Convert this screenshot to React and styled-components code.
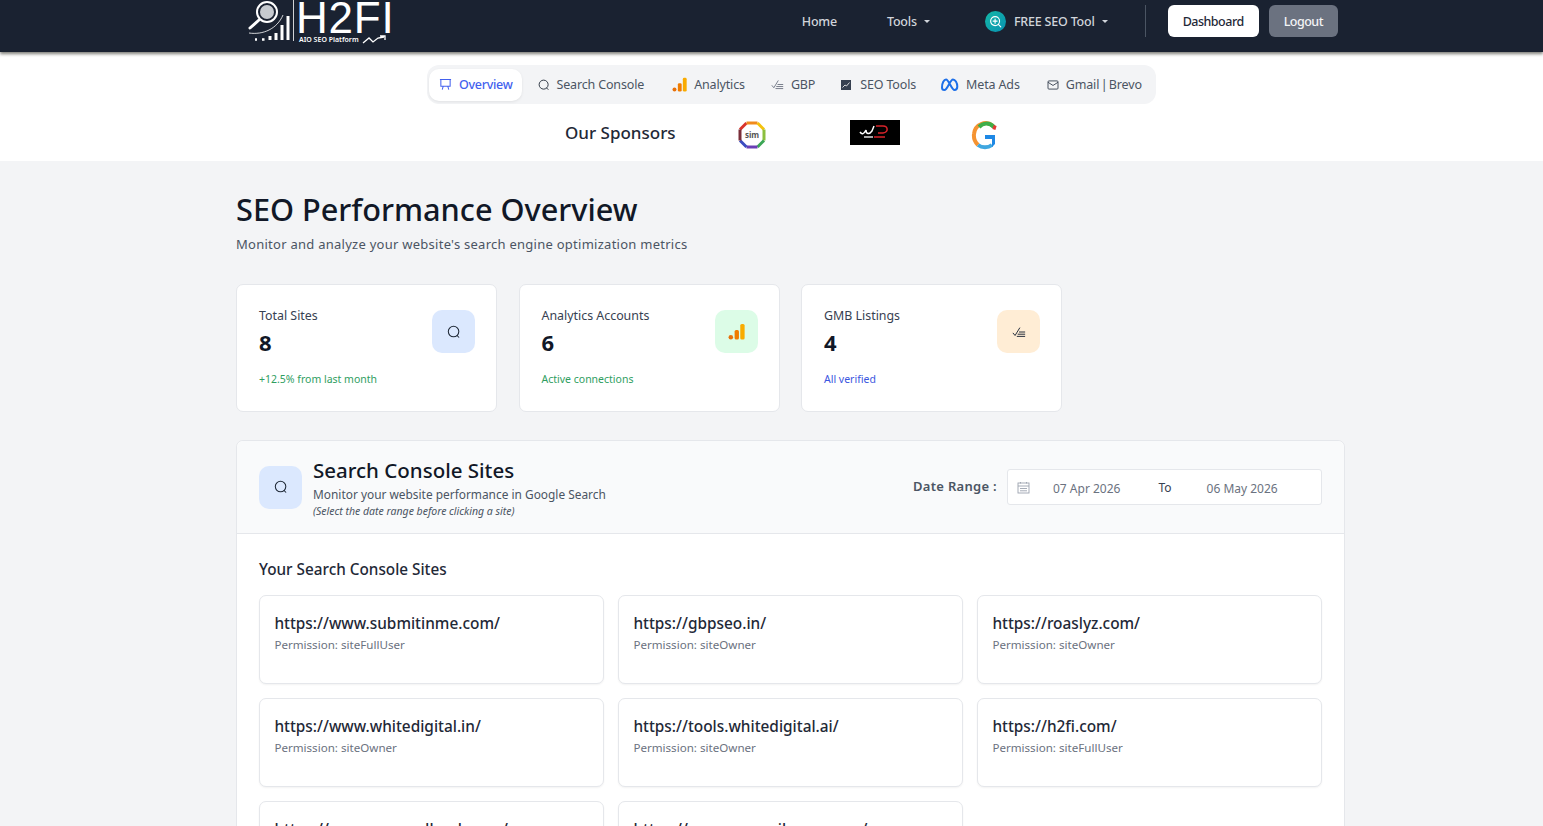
import React from "react";
import styled, { createGlobalStyle } from "styled-components";

const GlobalStyle = createGlobalStyle`
  html, body {
    margin: 0;
    height: 826px;
    overflow: hidden;
    background: #f3f4f6;
    font-family: "Noto Sans", "Open Sans", sans-serif;
    color: #111827;
  }
  * { box-sizing: border-box; }
`;

const Page = styled.div`
  height: 826px;
  overflow: hidden;
`;

const TopBar = styled.header`
  height: 52px;
  background: #1a2231;
  box-shadow: 0 2px 3px rgba(40, 40, 30, 0.6);
  display: flex;
  justify-content: space-between;
  padding: 0 205px 0 247px;
  position: relative;
`;

const Logo = styled.div`
  display: flex;
  align-items: flex-start;
  color: #fff;
  height: 46px;
  overflow: hidden;
`;

const LogoText = styled.div`
  display: flex;
  flex-direction: column;
  margin-left: 1px;
`;

const LogoName = styled.div`
  font-family: "Liberation Sans", sans-serif;
  font-weight: 400;
  font-size: 44px;
  line-height: 35px;
  letter-spacing: 0.8px;
  height: 35px;
  overflow: hidden;
`;

const LogoTag = styled.div`
  display: flex;
  align-items: center;
  gap: 3px;
  font-size: 7px;
  font-weight: 600;
  padding-left: 3px;
  line-height: 9px;
  height: 9px;
`;

const TopNav = styled.nav`
  display: flex;
  align-items: center;
  height: 42px;
  font-size: 12.5px;
  font-weight: 500;
  letter-spacing: -0.2px;
  color: #d1d5db;
`;

const TopLink = styled.span`
  display: inline-flex;
  align-items: center;
  margin-left: ${(p) => p.$gap}px;
`;

const Caret = styled.i`
  display: inline-block;
  margin-left: 7px;
  border-top: 3px solid currentColor;
  border-left: 3px solid transparent;
  border-right: 3px solid transparent;
`;

const SeoBadge = styled.span`
  width: 21px;
  height: 21px;
  border-radius: 50%;
  background: linear-gradient(135deg, #14b8a6, #0891b2);
  display: inline-flex;
  align-items: center;
  justify-content: center;
  margin-right: 8px;
`;

const NavDivider = styled.span`
  width: 1px;
  height: 32px;
  background: #4b5563;
  margin: 0 22px 0 37px;
`;

const NavButton = styled.span`
  height: 32px;
  border-radius: 6px;
  padding: 0 15px;
  display: inline-flex;
  align-items: center;
  letter-spacing: -0.5px;
  background: ${(p) => (p.$light ? "#fff" : "#6b7280")};
  color: ${(p) => (p.$light ? "#1f2937" : "#f3f4f6")};
  margin-right: ${(p) => (p.$light ? 10 : 0)}px;
`;

const SubHeader = styled.div`
  background: #fff;
  height: 109px;
  padding-top: 13px;
`;

const TabsRow = styled.div`
  display: flex;
  padding-left: 427px;
`;

const Tabs = styled.div`
  display: flex;
  align-items: center;
  height: 39px;
  padding: 0 4px 0 2px;
  border-radius: 12px;
  background: #f3f4f6;
`;

const Tab = styled.span`
  display: inline-flex;
  align-items: center;
  gap: ${(p) => p.$gap || 7}px;
  height: 32px;
  padding: 0 10px;
  margin-right: ${(p) => p.$mr || 0}px;
  border-radius: 10px;
  font-size: 12.5px;
  letter-spacing: ${(p) => (p.$active ? -0.3 : -0.15)}px;
  word-spacing: ${(p) => p.$ws || 0}px;
  white-space: nowrap;
  color: ${(p) => (p.$active ? "#4361ee" : "#4b5563")};
  background: ${(p) => (p.$active ? "#fff" : "transparent")};
  box-shadow: ${(p) => (p.$active ? "0 1px 3px rgba(0,0,0,.08)" : "none")};
  font-weight: ${(p) => (p.$active ? 500 : 400)};
`;

const Sponsors = styled.div`
  display: flex;
  align-items: center;
  height: 36px;
  margin-top: 11px;
  padding-left: 565px;
`;

const SponsorTitle = styled.div`
  font-size: 17px;
  font-weight: 500;
  color: #1f2937;
  width: 172px;
  margin-top: -2px;
`;

const SponsorMark = styled.div`
  display: flex;
  margin-top: 3px;
`;

const WdLogo = styled.div`
  width: 50px;
  height: 25px;
  background: #000;
  margin-left: 83px;
  margin-right: 71px;
  margin-top: -2px;
  display: flex;
  align-items: center;
  justify-content: center;
`;

const Main = styled.main`
  padding: 28px 198px 0 236px;
`;

const PageTitle = styled.h1`
  margin: 0;
  font-size: 30.7px;
  line-height: 41px;
  font-weight: 500;
  color: #111827;
`;

const PageSub = styled.p`
  margin: 4px 0 0;
  font-size: 13px;
  line-height: 20px;
  letter-spacing: 0.26px;
  color: #4b5563;
`;

const Stats = styled.div`
  display: flex;
  gap: 21.5px;
  margin-top: 30px;
`;

const StatCard = styled.div`
  width: 261px;
  height: 128px;
  background: #fff;
  border: 1px solid #e5e7eb;
  border-radius: 7px;
  padding: 22px 21px 0 22px;
  display: flex;
  justify-content: space-between;
  align-items: flex-start;
`;

const StatLabel = styled.div`
  font-size: 12.4px;
  line-height: 17px;
  color: #374151;
`;

const StatValue = styled.div`
  font-size: 22px;
  font-weight: 700;
  line-height: 30px;
  margin-top: 3px;
  color: #111827;
`;

const StatNote = styled.div`
  font-size: 10.5px;
  line-height: 14px;
  margin-top: 15px;
  color: ${(p) => p.$color};
`;

const IconTile = styled.div`
  width: 43px;
  height: 43px;
  border-radius: 10px;
  background: ${(p) => p.$bg};
  display: flex;
  align-items: center;
  justify-content: center;
  flex-shrink: 0;
  margin-top: ${(p) => p.$mt || 0}px;
`;

const Panel = styled.section`
  margin-top: 28px;
  background: #fff;
  border: 1px solid #e5e7eb;
  border-radius: 7px 7px 0 0;
`;

const PanelHead = styled.div`
  height: 93px;
  background: #f9fafb;
  border-bottom: 1px solid #e5e7eb;
  border-radius: 7px 7px 0 0;
  padding: 0 22px;
  display: flex;
  align-items: center;
  justify-content: space-between;
`;

const HeadLeft = styled.div`
  display: flex;
  align-items: center;
  gap: 11px;
`;

const PanelTitle = styled.h2`
  margin: 0;
  font-size: 20.5px;
  line-height: 26px;
  font-weight: 500;
  color: #111827;
`;

const PanelSub = styled.div`
  font-size: 11.9px;
  line-height: 17px;
  margin-top: 3px;
  color: #4b5563;
`;

const PanelHint = styled.div`
  font-size: 10.5px;
  line-height: 13px;
  margin-top: 2px;
  font-style: italic;
  color: #4b5563;
`;

const DateRow = styled.div`
  display: flex;
  align-items: center;
  gap: 10px;
`;

const DateLabel = styled.span`
  font-size: 13px;
  font-weight: 600;
  letter-spacing: 0.3px;
  color: #4b5563;
  margin-top: -3px;
`;

const DateBox = styled.div`
  width: 315px;
  height: 36px;
  background: #fff;
  border: 1px solid #e5e7eb;
  border-radius: 3px;
  padding: 0 9px;
  display: flex;
  align-items: center;
  font-size: 12px;
  color: #6b7280;
`;

const DateValue = styled.span`
  margin-left: ${(p) => p.$ml}px;
  margin-top: 2px;
`;

const DateTo = styled.span`
  margin-left: 38px;
  color: #374151;
`;

const PanelBody = styled.div`
  padding: 25px 22px 0;
`;

const SitesTitle = styled.h3`
  margin: 0 0 16px;
  font-size: 15.3px;
  line-height: 20px;
  font-weight: 500;
  color: #1f2937;
`;

const SiteGrid = styled.div`
  display: grid;
  grid-template-columns: 345px 345px 345px;
  column-gap: 14px;
  row-gap: 14.5px;
`;

const SiteCard = styled.div`
  height: 88.5px;
  border: 1px solid #e5e7eb;
  border-radius: 7px;
  box-shadow: 0 1px 2px rgba(0, 0, 0, 0.05);
  padding: 17.2px 14.4px;
  background: #fff;
`;

const SiteUrl = styled.div`
  font-size: 15.4px;
  line-height: 21px;
  font-weight: 500;
  color: #1f2937;
`;

const SitePerm = styled.div`
  font-size: 11.6px;
  line-height: 16px;
  margin-top: 2.8px;
  color: #6b7280;
`;

const SearchIcon = ({ size = 14, color = "#1f2937" }) => (
  <svg width={size} height={size} viewBox="0 0 16 16" fill="none" stroke={color} strokeWidth="1.2">
    <circle cx="7.5" cy="7.5" r="6" />
    <path d="M11.5 12l2 2" strokeLinecap="round" />
  </svg>
);

const ZoomPlusIcon = () => (
  <svg width="13" height="13" viewBox="0 0 16 16" fill="none" stroke="#fff" strokeWidth="1.4">
    <circle cx="7.5" cy="7.5" r="5.5" />
    <path d="M11.5 11.5l3 3M7.500 5v5M5 7.500h5" strokeLinecap="round" />
  </svg>
);

const ChecklistIcon = ({ size = 14, color = "#1f2937" }) => (
  <svg width={size} height={size} viewBox="0 0 16 16" fill="none" stroke={color} strokeWidth="1.1">
    <path d="M1 9l2.500 3L9 3" />
    <path d="M8 8h7M6.500 10.500H15M5.500 13H15" />
  </svg>
);

const AnalyticsIcon = ({ size = 17 }) => (
  <svg width={size} height={size} viewBox="0 0 18 18">
    <circle cx="3" cy="15" r="2.400" fill="#e8710a" />
    <rect x="7" y="7.500" width="4.600" height="10" rx="1.600" fill="#f07c00" />
    <rect x="13" y="1" width="4.600" height="16.500" rx="1.600" fill="#f9ab00" />
  </svg>
);

const OverviewIcon = () => (
  <svg width="13" height="13" viewBox="0 0 14 14" fill="none" stroke="#4361ee" strokeWidth="1.100">
    <path d="M1 1.500h12M2 1.500v7.500h10V1.500M4.500 9l-1 3.500M9.500 9l1 3.500" />
  </svg>
);

const SeoToolsIcon = () => (
  <svg width="10" height="10" viewBox="0 0 10 10">
    <rect width="10" height="10" fill="#374151" />
    <path d="M1.500 7.500L4 5l1.500 1L8.500 2.500" stroke="#fff" strokeWidth="0.800" fill="none" />
  </svg>
);

const MetaIcon = () => (
  <svg width="19" height="14" viewBox="0 0 19 14" fill="none">
    <path
      d="M2 9.500C2 5 4 1.500 6 1.500c3 0 5.500 10.500 8.500 10.500 1.800 0 2.800-1.400 2.800-3.400 0-4-2.200-7.100-4.300-7.100-3 0-5.500 10.500-8.600 10.500C3 12 2 11 2 9.500z"
      stroke="#1d6fe8"
      strokeWidth="2"
    />
  </svg>
);

const MailIcon = () => (
  <svg width="12" height="10" viewBox="0 0 13 11" fill="none" stroke="#374151" strokeWidth="1">
    <rect x="1" y="1" width="11" height="9" rx="1" />
    <path d="M1 2.500l5.500 3.500 5.500-3.500" />
  </svg>
);

const LogoMark = () => (
  <svg width="48" height="43" viewBox="0 0 48 43" fill="none" stroke="#fff">
    <circle cx="20" cy="12" r="10" strokeWidth="2" />
    <circle cx="20" cy="12" r="7" fill="#e5e7eb" stroke="none" opacity="0.85" />
    <path d="M12 20L3 28" strokeWidth="3" strokeLinecap="round" />
    <path d="M2 33c14 2 28-4 34-18" strokeWidth="0.800" />
    <path d="M8 39.500h2M15 39.500h2.500" strokeWidth="2.500" />
    <path d="M23 40v-4M29 40v-7M35 40V25M41 40V16" strokeWidth="3" />
    <path d="M46.500 0v41" strokeWidth="0.800" />
  </svg>
);

const TrendIcon = () => (
  <svg width="24" height="9" viewBox="0 0 24 9" fill="none" stroke="#fff" strokeWidth="1.300">
    <path d="M1 8l6-5 4 4 5-4 6-1M18 1h5v4" />
  </svg>
);

const SimLogo = () => (
  <svg width="30" height="30" viewBox="0 0 30 30" fill="none">
    <path d="M9.500 3l-6.500 6.500" stroke="#d9342b" strokeWidth="3" />
    <path d="M9.500 3h11" stroke="#f08a1d" strokeWidth="3" />
    <path d="M20.500 3L27 9.500" stroke="#f4c20d" strokeWidth="3" />
    <path d="M27 9.500v11" stroke="#8cbf3f" strokeWidth="3" />
    <path d="M27 20.500L20.500 27" stroke="#3aa655" strokeWidth="3" />
    <path d="M20.500 27h-11" stroke="#6a3fb5" strokeWidth="3" />
    <path d="M9.500 27L3 20.500" stroke="#3b4cc0" strokeWidth="3" />
    <path d="M3 20.500v-11" stroke="#7a2e3a" strokeWidth="3" />
    <text x="15" y="18" textAnchor="middle" fontSize="8" fontWeight="700" fill="#555" fontFamily="Noto Sans">
      sim
    </text>
  </svg>
);

const WdMark = () => (
  <svg width="34" height="18" viewBox="0 0 34 18" fill="none">
    <path d="M2 9c2 3 4 2 6-2 0 4 3 5 6 1l2-5" stroke="#fff" strokeWidth="1.500" />
    <path d="M18 3h7c5 0 6 6 0 7h-5" stroke="#d8232a" strokeWidth="1.500" />
    <path d="M6 14h9" stroke="#ddd" strokeWidth="1.500" />
    <path d="M16 14h11" stroke="#d8232a" strokeWidth="1.500" />
  </svg>
);

const GLogo = () => (
  <svg width="28" height="30" viewBox="0 0 28 30" fill="none">
    <path d="M22 6C15 0 4 4 3 14c-.5 4 1 8 4 11" stroke="#f59331" strokeWidth="4" />
    <path d="M8 7c4-4 10-5 15 0" stroke="#3fae49" strokeWidth="4" />
    <path d="M22 7l3 1" stroke="#e53935" strokeWidth="4" />
    <path d="M7 25c4 3 10 3 14 0" stroke="#3fa7e0" strokeWidth="4" />
    <path d="M14 15h10v9l-3 3v-8h-7z" fill="#1e88e5" />
  </svg>
);

const CalendarIcon = () => (
  <svg width="13" height="13" viewBox="0 0 13 13" fill="none" stroke="#9ca3af" strokeWidth="0.900">
    <rect x="1" y="2" width="11" height="10" />
    <path d="M1 5h11M3.500 1v1.500M9.500 1v1.500M3 7.500h7M3 9.800h7" />
  </svg>
);

const sites = [
  ["https://www.submitinme.com/", "siteFullUser"],
  ["https://gbpseo.in/", "siteOwner"],
  ["https://roaslyz.com/", "siteOwner"],
  ["https://www.whitedigital.in/", "siteOwner"],
  ["https://tools.whitedigital.ai/", "siteOwner"],
  ["https://h2fi.com/", "siteFullUser"],
  ["https://www.seoroadbook.com/", "siteOwner"],
  ["https://www.seomailpress.com/", "siteOwner"],
];

export default function App() {
  return (
    <Page>
      <GlobalStyle />
      <TopBar>
        <Logo>
          <LogoMark />
          <LogoText>
            <LogoName>H2FI</LogoName>
            <LogoTag>
              AIO SEO Platform <TrendIcon />
            </LogoTag>
          </LogoText>
        </Logo>
        <TopNav>
          <TopLink $gap={0}>Home</TopLink>
          <TopLink $gap={50}>
            Tools <Caret />
          </TopLink>
          <TopLink $gap={55}>
            <SeoBadge>
              <ZoomPlusIcon />
            </SeoBadge>
            FREE SEO Tool <Caret />
          </TopLink>
          <NavDivider />
          <NavButton $light>Dashboard</NavButton>
          <NavButton>Logout</NavButton>
        </TopNav>
      </TopBar>

      <SubHeader>
        <TabsRow>
          <Tabs>
            <Tab $active $mr={6} $gap={7}>
              <OverviewIcon /> Overview
            </Tab>
            <Tab $mr={8} $gap={6}>
              <SearchIcon size={12} /> Search Console
            </Tab>
            <Tab $mr={6} $gap={7}>
              <AnalyticsIcon size={15} /> Analytics
            </Tab>
            <Tab $mr={6}>
              <ChecklistIcon size={13} color="#6b7280" /> GBP
            </Tab>
            <Tab $mr={4} $gap={9}>
              <SeoToolsIcon /> SEO Tools
            </Tab>
            <Tab $mr={7} $gap={7}>
              <MetaIcon /> Meta Ads
            </Tab>
            <Tab $ws={-1.7}>
              <MailIcon /> Gmail | Brevo
            </Tab>
          </Tabs>
        </TabsRow>
        <Sponsors>
          <SponsorTitle>Our Sponsors</SponsorTitle>
          <SponsorMark>
            <SimLogo />
          </SponsorMark>
          <WdLogo>
            <WdMark />
          </WdLogo>
          <SponsorMark>
            <GLogo />
          </SponsorMark>
        </Sponsors>
      </SubHeader>

      <Main>
        <PageTitle>SEO Performance Overview</PageTitle>
        <PageSub>Monitor and analyze your website's search engine optimization metrics</PageSub>

        <Stats>
          <StatCard>
            <div>
              <StatLabel>Total Sites</StatLabel>
              <StatValue>8</StatValue>
              <StatNote $color="#2f9e5f">+12.5% from last month</StatNote>
            </div>
            <IconTile $bg="#dbe8fe" $mt={3}>
              <SearchIcon />
            </IconTile>
          </StatCard>
          <StatCard>
            <div>
              <StatLabel>Analytics Accounts</StatLabel>
              <StatValue>6</StatValue>
              <StatNote $color="#2f9e5f">Active connections</StatNote>
            </div>
            <IconTile $bg="#dcfce7" $mt={3}>
              <AnalyticsIcon />
            </IconTile>
          </StatCard>
          <StatCard>
            <div>
              <StatLabel>GMB Listings</StatLabel>
              <StatValue>4</StatValue>
              <StatNote $color="#3b56e0">All verified</StatNote>
            </div>
            <IconTile $bg="#ffedd5" $mt={3}>
              <ChecklistIcon />
            </IconTile>
          </StatCard>
        </Stats>

        <Panel>
          <PanelHead>
            <HeadLeft>
              <IconTile $bg="#dbe8fe">
                <SearchIcon />
              </IconTile>
              <div>
                <PanelTitle>Search Console Sites</PanelTitle>
                <PanelSub>Monitor your website performance in Google Search</PanelSub>
                <PanelHint>(Select the date range before clicking a site)</PanelHint>
              </div>
            </HeadLeft>
            <DateRow>
              <DateLabel>Date Range :</DateLabel>
              <DateBox>
                <CalendarIcon />
                <DateValue $ml={23}>07 Apr 2026</DateValue>
                <DateTo>To</DateTo>
                <DateValue $ml={35}>06 May 2026</DateValue>
              </DateBox>
            </DateRow>
          </PanelHead>
          <PanelBody>
            <SitesTitle>Your Search Console Sites</SitesTitle>
            <SiteGrid>
              {sites.map(([url, perm]) => (
                <SiteCard key={url}>
                  <SiteUrl>{url}</SiteUrl>
                  <SitePerm>Permission: {perm}</SitePerm>
                </SiteCard>
              ))}
            </SiteGrid>
          </PanelBody>
        </Panel>
      </Main>
    </Page>
  );
}
